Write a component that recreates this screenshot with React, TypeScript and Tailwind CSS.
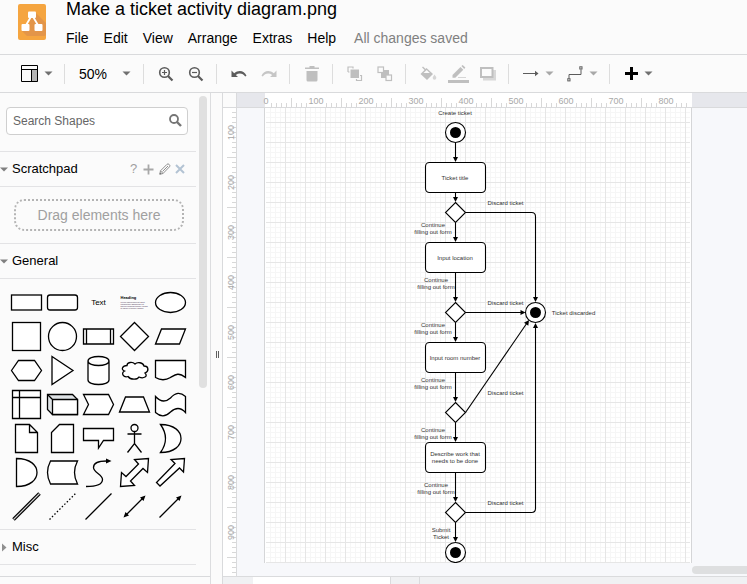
import React from "react";

const INK = "#000000";

/* ---------- Header ---------- */

function Logo() {
  return (
    <svg width="28" height="36" viewBox="0 0 28 36" aria-label="Diagram editor" role="img">
      <rect width="28" height="36" rx="2" fill="#f5a540" />
      <path d="M17 8 L28 19 V30 Q28 32 26 32 H9 L3.500 26.500 L11 20 L13 13 Z" fill="#e39549" />
      <path d="M14 11 L7.500 22 M14 11 L20.500 22" stroke="#ffffff" strokeWidth="1.800" />
      <rect x="10" y="7.500" width="8" height="6.500" rx="1" fill="#ffffff" />
      <rect x="3.500" y="20" width="8" height="7" rx="1" fill="#ffffff" />
      <rect x="16.500" y="20" width="8" height="7" rx="1" fill="#ffffff" />
    </svg>
  );
}

const MENUS = ["File", "Edit", "View", "Arrange", "Extras", "Help"];

function Header() {
  return (
    <header className="flex h-[55px] shrink-0 overflow-hidden border-b border-[#d9dadc] pl-[18px]">
      <div className="pt-1">
        <Logo />
      </div>
      <div className="pl-5">
        <h1 className="text-[18px] leading-[18px] whitespace-nowrap">Make a ticket activity diagram.png</h1>
        <nav className="mt-[10px] flex gap-[15px] text-[14px] leading-5 whitespace-nowrap">
          {MENUS.map((m) => (
            <button key={m} type="button">
              {m}
            </button>
          ))}
          <span className="pl-[3px] text-[#808080]">All changes saved</span>
        </nav>
      </div>
    </header>
  );
}

/* ---------- Toolbar ---------- */

function Caret({ color = "#707070" }: { color?: string }) {
  return (
    <svg width="9" height="5" viewBox="0 0 9 5" aria-hidden="true">
      <path d="M0.500 0.500 H8.500 L4.500 4.500 Z" fill={color} />
    </svg>
  );
}

function Tool({ label, wide, children }: { label: string; wide?: boolean; children: React.ReactNode }) {
  return (
    <button
      type="button"
      aria-label={label}
      className={
        wide
          ? "flex h-[30px] w-[44px] items-center justify-center gap-[6px]"
          : "flex h-[30px] w-[30px] items-center justify-center"
      }
    >
      {children}
    </button>
  );
}

function Group({ last, children }: { last?: boolean; children: React.ReactNode }) {
  return (
    <div
      className={
        last
          ? "flex h-5 items-center pr-[5px] pl-[7px]"
          : "flex h-5 items-center border-r border-[#dddddd] pr-[5px] pl-[7px]"
      }
    >
      {children}
    </div>
  );
}

function Magnifier({ plus }: { plus?: boolean }) {
  return (
    <svg width="16" height="16" viewBox="0 0 16 16" fill="none" stroke="#5c5c5c">
      <circle cx="6.500" cy="6.500" r="4.800" strokeWidth="1.600" />
      <path d="M10 10 L14.500 14.500" strokeWidth="2.200" />
      <path d={plus ? "M4 6.500 H9 M6.500 4 V9" : "M4 6.500 H9"} strokeWidth="1.200" />
    </svg>
  );
}

function Toolbar() {
  return (
    <div className="flex h-[38px] shrink-0 items-center overflow-hidden border-b border-[#d9dadc] pl-2">
      <Group>
        <Tool label="View layout" wide>
          <svg width="17" height="18" viewBox="0 0 17 18">
            <rect x="11" y="5" width="6" height="12" fill="#b4b4b4" />
            <path d="M0.500 0.500 H16.500 V16.500 H0.500 Z M0.500 4.500 H16.500 M10.500 4.500 V16.500" fill="none" stroke={INK} />
          </svg>
          <Caret />
        </Tool>
      </Group>
      <Group>
        <button type="button" className="flex h-[30px] w-[66px] items-center justify-between px-[7px] text-[14px] leading-5">
          50%
          <Caret />
        </button>
      </Group>
      <Group>
        <Tool label="Zoom in">
          <Magnifier plus />
        </Tool>
        <Tool label="Zoom out">
          <Magnifier />
        </Tool>
      </Group>
      <Group>
        <Tool label="Undo">
          <svg width="16" height="10" viewBox="0 0 16 10" fill="#5c5c5c">
            <path d="M0.500 1.500 V8 H7 L4.800 5.900 C8 3.600 12 4 14.200 7.500 L15.500 6.800 C13.500 1.500 7.500 0.500 3.200 4.200 Z" />
          </svg>
        </Tool>
        <Tool label="Redo">
          <svg width="16" height="10" viewBox="0 0 16 10" fill="#c6c6c6">
            <path d="M15.500 1.500 V8 H9 L11.200 5.900 C8 3.600 4 4 1.800 7.500 L0.500 6.800 C2.500 1.500 8.500 0.500 12.800 4.200 Z" />
          </svg>
        </Tool>
      </Group>
      <Group>
        <Tool label="Delete">
          <svg width="14" height="16" viewBox="0 0 14 16" fill="#bfbfbf">
            <path d="M0 1.500 H4.500 V0 H9.500 V1.500 H14 V3 H0 Z M1.500 5 H12.500 V14 Q12.500 15.500 11 15.500 H3 Q1.500 15.500 1.500 14 Z" />
          </svg>
        </Tool>
      </Group>
      <Group>
        <Tool label="To front">
          <svg width="16" height="16" viewBox="0 0 16 16" fill="none" stroke="#bfbfbf" strokeWidth="1.200">
            <path d="M1 6 V1 H6 V2.500 M1 6 H2.500 M9.500 13 V14.500 H14.500 V9.500 H13" />
            <rect x="3.500" y="3.500" width="8.500" height="8.500" fill="#bfbfbf" stroke="none" />
          </svg>
        </Tool>
        <Tool label="To back">
          <svg width="16" height="16" viewBox="0 0 16 16" fill="none" stroke="#bfbfbf" strokeWidth="1.200">
            <rect x="4" y="4" width="8" height="8" fill="#bfbfbf" stroke="none" />
            <rect x="1" y="1" width="5.500" height="5.500" fill="#fbfbfb" />
            <rect x="9" y="9" width="5.500" height="5.500" fill="#fbfbfb" />
          </svg>
        </Tool>
      </Group>
      <Group>
        <Tool label="Fill color">
          <svg width="17" height="18" viewBox="0 0 17 18" fill="#bfbfbf">
            <path d="M2.500 2 L7.500 6.800" stroke="#bfbfbf" strokeWidth="1.400" />
            <path d="M6.500 3 L13 9 L7 15 L0.500 9 Z" />
            <path d="M3.500 8 L6.700 5 L9.800 8 Z" fill="#fbfbfb" />
            <path d="M14.500 9.500 Q16.500 12 16.300 13 A1.800 1.800 0 0 1 12.700 13 Q12.700 12 14.500 9.500 Z" fill="#d6d6d6" />
          </svg>
        </Tool>
        <Tool label="Line color">
          <svg width="21" height="20" viewBox="0 0 21 20" fill="#bfbfbf">
            <path d="M4.500 13.800 V11 L12.500 3 L15.300 5.800 L7.300 13.800 Z M13.400 2.100 L14.700 0.900 L17.400 3.600 L16.200 4.900 Z" />
            <rect x="10" y="13" width="8" height="1" fill="#d6d6d6" />
            <rect y="16" width="21" height="3" />
          </svg>
        </Tool>
        <Tool label="Shadow">
          <svg width="16" height="14" viewBox="0 0 16 14">
            <rect x="3" y="3" width="13" height="10.500" fill="#d8d8d8" />
            <rect x="1" y="1" width="11.500" height="9" fill="#fbfbfb" stroke="#bfbfbf" strokeWidth="2" />
          </svg>
        </Tool>
      </Group>
      <Group>
        <Tool label="Connection" wide>
          <svg width="16" height="7" viewBox="0 0 16 7">
            <path d="M0 3.500 H13" stroke="#5c5c5c" />
            <path d="M12 0.800 L15.500 3.500 L12 6.200 Z" fill="#5c5c5c" />
          </svg>
          <Caret color="#a8a8a8" />
        </Tool>
        <Tool label="Waypoints" wide>
          <svg width="16" height="16" viewBox="0 0 16 16" fill="none" stroke="#5c5c5c">
            <path d="M2 12.500 V8.500 H14 V3.500" />
            <rect x="0.800" y="12.700" width="2.200" height="2.200" />
            <rect x="12.800" y="0.800" width="2.200" height="2.200" />
          </svg>
          <Caret color="#a8a8a8" />
        </Tool>
      </Group>
      <Group last>
        <Tool label="Insert" wide>
          <svg width="13" height="13" viewBox="0 0 13 13">
            <path d="M5 0 H8 V5 H13 V8 H8 V13 H5 V8 H0 V5 H5 Z" fill={INK} />
          </svg>
          <Caret />
        </Tool>
      </Group>
    </div>
  );
}

/* ---------- Sidebar ---------- */

const SHAPES: { name: string; art: React.ReactNode }[] = [
  { name: "Rectangle", art: <rect x="-15" y="-7.500" width="30" height="15" /> },
  { name: "Rounded rectangle", art: <rect x="-15" y="-7.500" width="30" height="15" rx="2.500" /> },
  {
    name: "Text",
    art: (
      <text y="2.500" textAnchor="middle" fontSize="8" fill={INK} stroke="none">
        Text
      </text>
    ),
  },
  {
    name: "Textbox",
    art: (
      <g stroke="none" fill="#4a3050" fontSize="2">
        <text x="-14" y="-4" fontSize="4" fontWeight="bold" fill={INK}>
          Heading
        </text>
        <text x="-14" y="0">Lorem ipsum dolor sit amet,</text>
        <text x="-14" y="2">consectetur adipisicing elit,</text>
        <text x="-14" y="4">sed do eiusmod tempor incidid</text>
        <text x="-14" y="6">ut labore et dolore magna</text>
      </g>
    ),
  },
  { name: "Ellipse", art: <ellipse rx="15" ry="10" /> },
  { name: "Square", art: <rect x="-14" y="-14" width="28" height="28" /> },
  { name: "Circle", art: <circle r="14" /> },
  { name: "Process", art: <path d="M-15 -7.500 H15 V7.500 H-15 Z M-12 -7.500 V7.500 M12 -7.500 V7.500" /> },
  { name: "Diamond", art: <path d="M0 -14 L14 0 L0 14 L-14 0 Z" /> },
  { name: "Parallelogram", art: <path d="M-15 7.500 L-9 -7.500 H15 L9 7.500 Z" /> },
  { name: "Hexagon", art: <path d="M-15 0 L-8 -10 H8 L15 0 L8 10 H-8 Z" /> },
  { name: "Triangle", art: <path d="M-10.500 -14 L10.500 0 L-10.500 14 Z" /> },
  {
    name: "Cylinder",
    art: (
      <path d="M-10.500 -9.500 C-10.500 -15.500 10.500 -15.500 10.500 -9.500 V9.500 C10.500 15.500 -10.500 15.500 -10.500 9.500 Z M-10.500 -9.500 C-10.500 -3.500 10.500 -3.500 10.500 -9.500" />
    ),
  },
  {
    name: "Cloud",
    art: (
      <path d="M-7.500 -5 C-12 -5 -14 -1 -10 0.500 C-14 2.500 -11 7.500 -6.500 6 C-4 9.500 3 9.500 4.500 6.500 C9 8.500 14 6 10.500 2.500 C15 0.500 14 -4.500 9.500 -4.500 C8.500 -8 3 -9 0.500 -6.500 C-2 -9 -7.500 -8.500 -7.500 -5 Z" />
    ),
  },
  { name: "Document", art: <path d="M-15 -10 H15 V7 C8 1.500 5 4 0 7 C-5 10 -10 10 -15 7 Z" /> },
  { name: "Internal storage", art: <path d="M-14 -14 H14 V14 H-14 Z M-14 -7 H14 M-7 -14 V14" /> },
  {
    name: "Cube",
    art: (
      <>
        <path d="M-15 -10 H10 L15 -5 V10 H-10 L-15 5 Z" fill="#dfe3e6" />
        <path d="M-10 -5 H15 V10 H-10 Z M-15 -10 L-10 -5" />
      </>
    ),
  },
  { name: "Step", art: <path d="M-15 -10 H10 L15 0 L10 10 H-15 L-10 0 Z" /> },
  { name: "Trapezoid", art: <path d="M-15 7.500 L-9 -7.500 H9 L15 7.500 Z" /> },
  {
    name: "Tape",
    art: (
      <path d="M-15 -8 C-10 -2.500 -5 -2 0 -6.500 C5 -12.500 10 -12.500 15 -8 V8 C10 2.500 5 3 0 7.500 C-5 12.500 -10 12.500 -15 8 Z" />
    ),
  },
  { name: "Note", art: <path d="M-11 -14 H3 L11 -6 V14 H-11 Z M3 -14 V-6 H11" /> },
  { name: "Card", art: <path d="M-3 -14 H11 V14 H-11 V-6 Z" /> },
  { name: "Callout", art: <path d="M-15 -10 H15 V2 H5 L0 9.500 V2 H-15 Z" /> },
  {
    name: "Actor",
    art: (
      <>
        <circle cy="-10.500" r="3.500" />
        <path d="M0 -7 V5 M-7 -4.500 H7 M-7 14 L0 5 L7 14" fill="none" />
      </>
    ),
  },
  { name: "Or", art: <path d="M-10 -14 C4 -14 10.500 -7 10.500 0 C10.500 7 4 14 -10 14 Q0 0 -10 -14 Z" /> },
  { name: "And", art: <path d="M-10 -14 C4 -14 10.500 -7 10.500 0 C10.500 7 4 14 -10 14 Z" /> },
  { name: "Data storage", art: <path d="M-12 -11.500 H15 Q9 0 15 11.500 H-12 Q-18 0 -12 -11.500 Z" /> },
  {
    name: "Curve",
    art: (
      <>
        <path d="M-12.500 14 C-2 14 4 12 4 7 C4 2 -5 0 -5 -5 C-5 -9 0 -11.500 8 -11.500" fill="none" />
        <path d="M7.500 -14 L13 -11.500 L7.500 -9 Z" fill={INK} stroke="none" />
      </>
    ),
  },
  {
    name: "Bidirectional arrow",
    art: (
      <path d="M14 -14 L13 0 L8.500 -4 L-4 8.500 L0 13 L-14 14 L-13 0 L-8.500 4 L4 -8.500 L0 -13 Z" />
    ),
  },
  { name: "Arrow", art: <path d="M14 -14 L13 -0.500 L9 -4.500 L-10.500 13.500 L-14 10 L4.500 -9 L0.500 -13 Z" /> },
  {
    name: "Link",
    art: (
      <>
        <path d="M-13 13 L13 -13" stroke={INK} strokeWidth="3.600" />
        <path d="M-13 13 L13 -13" stroke="#d0d0d0" strokeWidth="1.100" />
      </>
    ),
  },
  { name: "Dashed line", art: <path d="M-13 13 L13 -13" strokeDasharray="1.500 2" /> },
  { name: "Line", art: <path d="M-13 13 L13 -13" /> },
  {
    name: "Bidirectional connector",
    art: (
      <>
        <path d="M-9 9 L9 -9" />
        <path d="M11 -11 L9 -5.500 L5.500 -9 Z M-11 11 L-9 5.500 L-5.500 9 Z" fill={INK} stroke="none" />
      </>
    ),
  },
  {
    name: "Directional connector",
    art: (
      <>
        <path d="M-11 11 L9 -9" />
        <path d="M11 -11 L9 -5.500 L5.500 -9 Z" fill={INK} stroke="none" />
      </>
    ),
  },
];

function SectionTitle({ title, open, children }: { title: string; open?: boolean; children?: React.ReactNode }) {
  return (
    <div className="flex h-[35px] items-center justify-between border-b border-[#e3e3e5]">
      <button type="button" className="flex items-center text-[13px] leading-5">
        <span className="flex w-3">
          {open ? (
            <svg width="8" height="5" viewBox="0 0 8 5">
              <path d="M0 0.500 H8 L4 4.500 Z" fill="#808080" />
            </svg>
          ) : (
            <svg width="8" height="9" viewBox="0 0 8 9">
              <path d="M2 0.500 V8.500 L6.500 4.500 Z" fill="#909090" />
            </svg>
          )}
        </span>
        {title}
      </button>
      {children}
    </div>
  );
}

function Sidebar() {
  return (
    <aside className="relative flex w-[211px] shrink-0 flex-col overflow-hidden border-r border-[#dcdddf]">
      <div className="min-h-0 w-[196px] flex-1 overflow-hidden">
        <div className="border-b border-[#e3e3e5] pt-[14px] pr-2 pb-4 pl-[6px]">
          <label className="flex h-7 items-center rounded-[4px] border border-[#cfcfcf] bg-white pr-[5px] pl-[6px]">
            <input
              type="text"
              aria-label="Search Shapes"
              placeholder="Search Shapes"
              className="min-w-0 flex-1 text-[12px] leading-4 outline-none placeholder:text-[#666666]"
            />
            <svg width="13" height="14" viewBox="0 0 13 14" fill="none" stroke="#757575">
              <circle cx="5" cy="5" r="4" strokeWidth="1.800" />
              <path d="M8 8 L12 12" strokeWidth="2.400" />
            </svg>
          </label>
        </div>
        <SectionTitle title="Scratchpad" open>
          <span className="flex items-center pr-[9px] text-[#a0a0a0]">
            <button type="button" aria-label="Help" className="w-[13px] text-center text-[13px] leading-5">
              ?
            </button>
            <button type="button" aria-label="Add" className="flex w-4 justify-center">
              <svg width="11" height="11" viewBox="0 0 11 11">
                <path d="M5.500 0.500 V10.500 M0.500 5.500 H10.500" stroke="#a8a8a8" strokeWidth="1.800" />
              </svg>
            </button>
            <button type="button" aria-label="Edit" className="flex w-[17px] justify-center">
              <svg width="12" height="12" viewBox="0 0 12 12" fill="none" stroke="#909090">
                <path d="M0.800 11.200 L1.500 7.800 L8 1.300 Q9 0.300 10.200 1.500 Q11.500 2.800 10.500 3.800 L4 10.500 Z M1.500 7.800 L4 10.500 M3.500 8.500 L9 3" />
                <path d="M0.500 11.500 L1 9.500 L2.500 11 Z" fill="#707070" stroke="none" />
              </svg>
            </button>
            <button type="button" aria-label="Close" className="flex w-[14px] justify-center">
              <svg width="10" height="10" viewBox="0 0 10 10">
                <path d="M1 1 L9 9 M9 1 L1 9" stroke="#b3c3d3" strokeWidth="2" />
              </svg>
            </button>
          </span>
        </SectionTitle>
        <div className="border-b border-[#e3e3e5] px-3 py-3 pl-[14px]">
          <div className="flex h-8 items-center justify-center rounded-[10px] border-2 border-dotted border-[#b4b4b4] text-[14px] leading-5 text-[#a0a0a0]">
            Drag elements here
          </div>
        </div>
        <SectionTitle title="General" open />
        <div className="grid grid-cols-5 border-b border-[#e3e3e5] px-2 py-[6px]">
          {SHAPES.map((s) => (
            <button key={s.name} type="button" aria-label={s.name} className="flex h-[34px] items-center justify-center">
              <svg width="34" height="32" viewBox="-17.5 -16.5 34 32" fill="#ffffff" stroke={INK} strokeWidth="1.300">
                {s.art}
              </svg>
            </button>
          ))}
        </div>
        <SectionTitle title="Misc" />
      </div>
      <div className="h-2 shrink-0 border-t border-[#d9dadc]" />
      <div className="absolute top-[3px] right-[3px] h-[292px] w-2 rounded-full bg-[#e0e0e0]" />
    </aside>
  );
}

/* ---------- Rulers ---------- */

function HorizontalRuler() {
  const ticks = Array.from({ length: 85 }, (_, i) => i);
  return (
    <div className="flex h-[15px] shrink-0 border-b border-[#d9dadc] bg-[#e6e7ec]">
      <div className="w-7 shrink-0" />
      <svg width="427" height="14" viewBox="265 93 427 14" className="shrink-0 overflow-visible bg-white">
        {ticks.map((i) => {
          const near = i % 10;
          if (i !== 1 && (near <= 1 || near === 9)) return null;
          const x = 266 + i * 5;
          const top = near === 5 ? 98 : 103;
          return <rect key={i} x={x} y={top} width="1" height={107 - top} fill="#d8d8d8" />;
        })}
        {[0, 1, 2, 3, 4, 5, 6, 7, 8].map((n) => (
          <text key={n} x={266 + n * 50} y="104" fontSize="9" textAnchor="middle" fill="#a8a8a8">
            {n * 100}
          </text>
        ))}
      </svg>
    </div>
  );
}

function VerticalRuler() {
  const ticks = Array.from({ length: 93 }, (_, i) => i);
  return (
    <div className="min-h-0 flex-1 overflow-hidden border-t border-r border-[#d9dadc] bg-white">
      <svg width="13" height="468" viewBox="223 108 13 468">
        {ticks.map((i) => {
          const y = 112 + i * 5;
          const left = i % 10 === 9 ? 227 : 232;
          return <rect key={i} x={left} y={y} width={236 - left} height="1" fill="#d8d8d8" />;
        })}
        {[1, 2, 3, 4, 5, 6, 7, 8, 9].map((n) => (
          <text
            key={n}
            transform={`translate(234 ${82.5 + n * 50}) rotate(-90)`}
            fontSize="9"
            textAnchor="middle"
            fill="#a8a8a8"
          >
            {n * 100}
          </text>
        ))}
      </svg>
    </div>
  );
}

/* ---------- Diagram ---------- */

const CX = 455.5;
const END_X = 535.5;

function Terminal({ x, y }: { x: number; y: number }) {
  return (
    <>
      <circle cx={x} cy={y} r="10" />
      <circle cx={x} cy={y} r="5.500" fill={INK} stroke="none" />
    </>
  );
}

function Down({ from, to }: { from: number; to: number }) {
  return (
    <>
      <path d={`M${CX} ${from} V${to - 3}`} />
      <path d={`M${CX} ${to} l-2.500 -5 h5 z`} fill={INK} stroke="none" />
    </>
  );
}

function Label({ x, y, lines }: { x: number; y: number; lines: string[] }) {
  return (
    <>
      {lines.map((line, i) => (
        <text key={line} x={x} y={y + 2 + i * 7} textAnchor="middle">
          {line}
        </text>
      ))}
    </>
  );
}

const STEPS = [
  { y: 162.5, lines: ["Ticket title"] },
  { y: 242.5, lines: ["Input location"] },
  { y: 342.5, lines: ["Input room number"] },
  { y: 442.5, lines: ["Describe work that", "needs to be done"] },
];
const DECISIONS = [212.5, 312.5, 412.5, 512.5];
const FLOWS = [
  [142.5, 162],
  [192.5, 202],
  [222.5, 242],
  [272.5, 302],
  [322.5, 342],
  [372.5, 402],
  [422.5, 442],
  [472.5, 502],
  [522.5, 542],
];
const CONTINUE = [
  [433, 225],
  [436, 280],
  [433, 325],
  [433, 380],
  [433, 430],
  [436, 485],
];

function Diagram() {
  return (
    <svg width="426" height="455" viewBox="265 108 426 455" className="block" role="img" aria-label="Ticket activity diagram">
      <defs>
        <pattern id="grid" x="285" y="122" width="20" height="20" patternUnits="userSpaceOnUse">
          <path d="M5.500 0 V20 M10.500 0 V20 M15.500 0 V20 M0 5.500 H20 M0 10.500 H20 M0 15.500 H20" stroke="#f6f6f6" />
          <path d="M0.500 0 V20 M0 0.500 H20" stroke="#e6e6e6" />
        </pattern>
      </defs>
      <rect x="266" y="108" width="424" height="455" fill="url(#grid)" />
      <g fill="#ffffff" stroke={INK} strokeWidth="1.100">
        <path d={`M465.500 212.500 H531.500 Q${END_X} 212.500 ${END_X} 216.500 V299`} fill="none" />
        <path d={`M465.500 512.500 H531.500 Q${END_X} 512.500 ${END_X} 508.500 V326`} fill="none" />
        <path d="M465.500 312.500 H522" fill="none" />
        <path d="M465.500 412.500 L527 323" fill="none" />
        <g fill={INK} stroke="none">
          <path d="M535.500 302 l-2.500 -5 h5 z" />
          <path d="M535.500 323 l-2.500 5 h5 z" />
          <path d="M525.500 312.500 l-5 -2.500 v5 z" />
          <path d="M529 320 L528.300 325.700 L524 322.800 Z" />
        </g>
        {FLOWS.map(([from, to]) => (
          <Down key={from} from={from} to={to} />
        ))}
        {STEPS.map((s) => (
          <rect key={s.y} x="425.500" y={s.y} width="60" height="30" rx="4" />
        ))}
        {DECISIONS.map((y) => (
          <path key={y} d={`M${CX} ${y - 10} l10 10 l-10 10 l-10 -10 z`} />
        ))}
        <Terminal x={CX} y={132.5} />
        <Terminal x={END_X} y={312.5} />
        <Terminal x={CX} y={552.5} />
      </g>
      <g fontSize="6" fill="#333333">
        <Label x={455} y={113} lines={["Create ticket"]} />
        {STEPS.map((s) => (
          <Label key={s.y} x={455} y={s.y + (s.lines.length > 1 ? 11.5 : 15.5)} lines={s.lines} />
        ))}
        {CONTINUE.map(([x, y]) => (
          <Label key={y} x={x} y={y} lines={["Continue", "filling out form"]} />
        ))}
        {[203, 303, 393, 503].map((y) => (
          <Label key={y} x={505.5} y={y} lines={["Discard ticket"]} />
        ))}
        <Label x={573.5} y={313} lines={["Ticket discarded"]} />
        <Label x={441} y={530} lines={["Submit", "Ticket"]} />
      </g>
    </svg>
  );
}

function Workspace() {
  return (
    <main className="flex min-w-0 flex-1 flex-col border-l border-[#d9dadc]">
      <div className="flex min-h-0 flex-1">
        <div className="flex w-[14px] shrink-0 flex-col">
          <div className="h-[14px] shrink-0 border-r border-[#d9dadc]" />
          <VerticalRuler />
        </div>
        <div className="flex min-w-0 flex-1 flex-col overflow-hidden">
          <HorizontalRuler />
          <div className="relative min-h-0 flex-1 overflow-hidden bg-[#f7f8fb] pl-[27px]">
            <div className="w-[428px] border-x border-[#d5d6d8] bg-white">
              <Diagram />
            </div>
            <div className="absolute right-0 bottom-[2px] left-[455px] h-2 rounded-l-full bg-[#dedfe0]" />
          </div>
        </div>
      </div>
      <footer className="flex h-2 shrink-0 border-t border-[#dadbdd] bg-[#f0f1f3]">
        <div className="w-[30px]" />
        <div className="w-[138px] border-r border-[#dadbdd] bg-white" />
        <div className="w-[29px] border-r border-[#dadbdd]" />
      </footer>
    </main>
  );
}

export default function App() {
  return (
    <div className="flex h-screen flex-col overflow-hidden bg-[#fbfbfb] font-['Liberation_Sans',Arial,sans-serif] text-black">
      <Header />
      <Toolbar />
      <div className="flex min-h-0 flex-1">
        <Sidebar />
        <div className="flex w-[11px] shrink-0 items-center justify-center pt-8 pl-[2px]">
          <svg width="3" height="7" viewBox="0 0 3 7">
            <path d="M0.500 0 V7 M2.500 0 V7" stroke="#606060" />
          </svg>
        </div>
        <Workspace />
      </div>
    </div>
  );
}
